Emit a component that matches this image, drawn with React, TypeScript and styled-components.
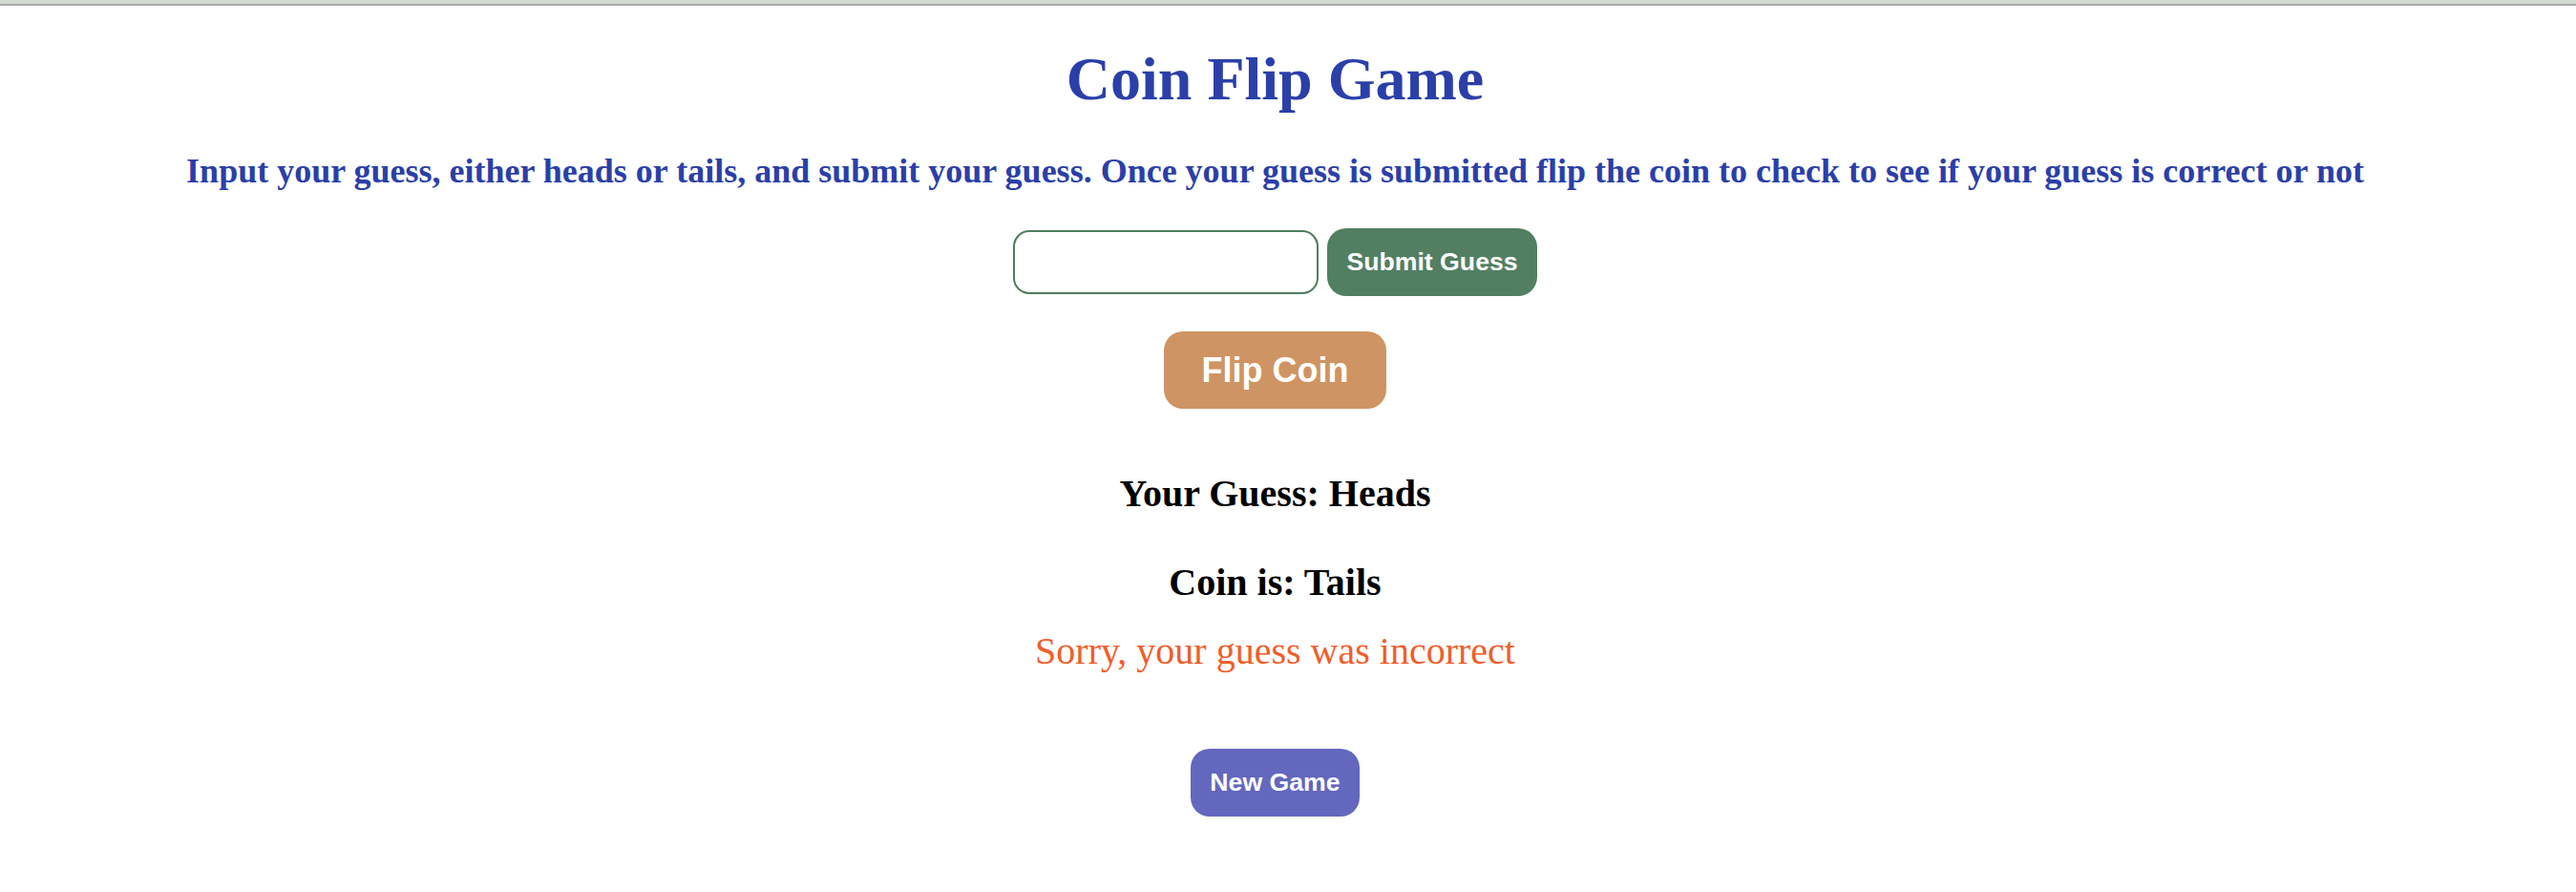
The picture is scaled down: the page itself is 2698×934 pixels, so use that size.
import React, { useState } from "react";
import styled, { createGlobalStyle } from "styled-components";

const GlobalStyle = createGlobalStyle`
  html, body {
    margin: 0;
    padding: 0;
    background: #ffffff;
  }
  body {
    font-family: "Liberation Serif", "Times New Roman", serif;
  }
`;

const TopBar = styled.div`
  height: 4px;
  background: #d5dad2;
  border-bottom: 2px solid #a9aba7;
`;

const Main = styled.main`
  display: flex;
  flex-direction: column;
  align-items: center;
  text-align: center;
  padding: 0 27px 0 0;
`;

const Title = styled.h1`
  margin: 40px 0 0;
  font-size: 64px;
  line-height: 1.15;
  font-weight: bold;
  color: #2b3fa8;
`;

const Instructions = styled.h3`
  margin: 39px 0 0;
  font-size: 36px;
  line-height: 1.15;
  font-weight: bold;
  color: #2b3fa8;
`;

const GuessForm = styled.form`
  display: flex;
  align-items: center;
  gap: 9px;
  margin-top: 39px;
`;

const GuessInput = styled.input`
  box-sizing: border-box;
  width: 320px;
  height: 67px;
  border: 2px solid #4f7d5f;
  border-radius: 17px;
  padding: 0 16px;
  font-size: 26px;
  font-family: "Liberation Sans", Arial, sans-serif;
  outline: none;
`;

const ActionButton = styled.button<{ $bg: string; $size: number; $padX: number }>`
  border: none;
  border-radius: 20px;
  background: ${(p) => p.$bg};
  color: #ffffff;
  font-family: "Liberation Sans", Arial, sans-serif;
  font-weight: bold;
  font-size: ${(p) => p.$size}px;
  line-height: 1.15;
  padding: 20px ${(p) => p.$padX}px;
  cursor: pointer;
`;

const FlipWrap = styled.div`
  margin-top: 37px;
`;

const Result = styled.h3<{ $gap: number }>`
  margin: ${(p) => p.$gap}px 0 0;
  font-size: 40px;
  line-height: 1.15;
  font-weight: bold;
  color: #000000;
`;

const Verdict = styled.p`
  margin: 26px 0 0;
  font-size: 40px;
  line-height: 1.15;
  color: #f05e2a;
`;

const NewGameWrap = styled.div`
  margin-top: 79px;
`;

export default function App() {
  const [guess, setGuess] = useState("");
  return (
    <>
      <GlobalStyle />
      <TopBar />
      <Main>
        <Title>Coin Flip Game</Title>
        <Instructions>
          Input your guess, either heads or tails, and submit your guess. Once your guess is submitted flip the coin to check to see if your guess is correct or not
        </Instructions>
        <GuessForm onSubmit={(e) => e.preventDefault()}>
          <GuessInput value={guess} onChange={(e) => setGuess(e.target.value)} />
          <ActionButton type="submit" $bg="#527f62" $size={26.67} $padX={20}>
            Submit Guess
          </ActionButton>
        </GuessForm>
        <FlipWrap>
          <ActionButton $bg="#cf9463" $size={36} $padX={40}>
            Flip Coin
          </ActionButton>
        </FlipWrap>
        <Result $gap={66}>Your Guess: Heads</Result>
        <Result $gap={47}>Coin is: Tails</Result>
        <Verdict>Sorry, your guess was incorrect</Verdict>
        <NewGameWrap>
          <ActionButton $bg="#6367be" $size={26.67} $padX={20}>
            New Game
          </ActionButton>
        </NewGameWrap>
      </Main>
    </>
  );
}
